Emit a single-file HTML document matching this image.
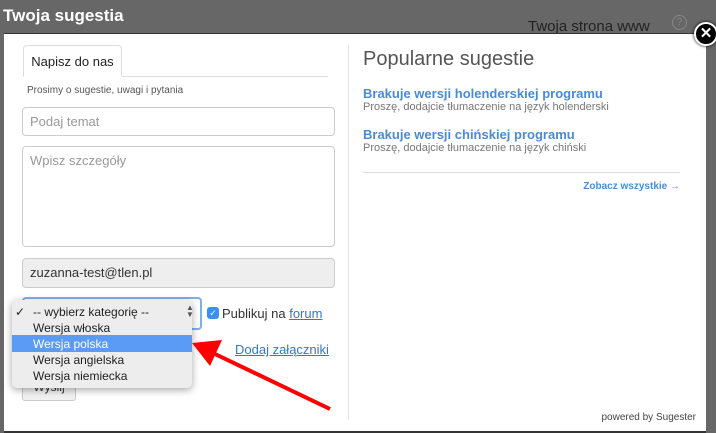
<!DOCTYPE html>
<html><head><meta charset="utf-8"><style>
body{margin:0;width:716px;height:432px;background:#676767;position:relative;overflow:hidden;font-family:"Liberation Sans",sans-serif}
.a{position:absolute}
.in{position:absolute;border:1px solid #ccc;border-radius:4px;background:#fff;box-sizing:border-box;font-size:13px;color:#999;padding:0 7px}
</style></head><body>
<div class="a" style="left:3px;top:6px;color:#fff;font-weight:bold;font-size:17px">Twoja sugestia</div>
<div class="a" style="left:528px;top:18px;color:#222;font-size:15px">Twoja strona www</div>
<div class="a" style="left:672px;top:15px;width:13px;height:13px;border:1px solid #888;border-radius:50%;color:#888;font-size:10px;text-align:center;line-height:13px">?</div>
<div class="a" style="left:4px;top:33px;width:702px;height:397px;background:#fff;border-top:1px solid #333;border-bottom:2px solid #333"></div>
<div class="a" style="left:348px;top:45px;width:1px;height:375px;background:#e3e3e3"></div>
<div class="a" style="left:23px;top:76px;width:305px;height:1px;background:#ddd"></div>
<div class="a" style="left:23px;top:45px;width:99px;height:32px;border:1px solid #ddd;border-bottom:1px solid #fff;border-radius:4px 4px 0 0;background:#fff;box-sizing:border-box;font-size:13px;color:#222;text-align:center;line-height:32px">Napisz do nas</div>
<div class="a" style="left:27px;top:85px;font-size:10px;color:#555">Prosimy o sugestie, uwagi i pytania</div>
<div class="in" style="left:22px;top:107px;width:313px;height:29px;line-height:27px">Podaj temat</div>
<div class="in" style="left:22px;top:146px;width:313px;height:101px;padding-top:6px">Wpisz szczegóły</div>
<div class="in" style="left:22px;top:258px;width:313px;height:30px;line-height:28px;background:#eee;color:#333">zuzanna-test@tlen.pl</div>
<div class="a" style="left:22px;top:297px;width:180px;height:33px;border:2px solid #7fb0e8;border-radius:4px;box-sizing:border-box;background:#fff"></div>
<div class="a" style="left:22px;top:376px;width:54px;height:25px;border:1px solid #ccc;border-radius:3px;background:#f2f2f2;box-sizing:border-box;font-size:12px;text-align:center;line-height:20px;color:#333">Wyślij</div>
<div class="a" style="left:207px;top:307px;width:12px;height:12px;background:#3a8ff0;border-radius:3px;color:#fff;font-size:9px;text-align:center;line-height:12px">✓</div>
<div class="a" style="left:222px;top:306px;font-size:13px;color:#333">Publikuj na <span style="color:#3178c6;text-decoration:underline">forum</span></div>
<div class="a" style="left:235px;top:342px;font-size:13px;color:#3178c6;text-decoration:underline">Dodaj załączniki</div>
<div class="a" style="left:12px;top:300px;width:180px;height:88px;background:#ededed;border-radius:5px;box-shadow:0 2px 8px rgba(0,0,0,.35);font-size:12px;color:#222">
<div class="a" style="left:3px;top:5px">✓</div>
<div class="a" style="left:21px;top:5px">-- wybierz kategorię --</div>
<div class="a" style="left:174px;top:4px;font-size:8px;line-height:7px;color:#555">▲<br>▼</div>
<div class="a" style="left:21px;top:21px">Wersja włoska</div>
<div class="a" style="left:0;top:35px;width:180px;height:17px;background:#5b9bf5"></div>
<div class="a" style="left:21px;top:37px;color:#fff">Wersja polska</div>
<div class="a" style="left:21px;top:53px">Wersja angielska</div>
<div class="a" style="left:21px;top:69px">Wersja niemiecka</div>
</div>
<svg class="a" style="left:0;top:0" width="716" height="432"><line x1="330" y1="409" x2="215" y2="354" stroke="#f00" stroke-width="4"/><polygon points="192,343 222,340 210,366" fill="#f00"/></svg>
<div class="a" style="left:363px;top:48px;font-size:20px;color:#555">Popularne sugestie</div>
<div class="a" style="left:363px;top:86px;font-size:13px;font-weight:bold;color:#4a8ad6">Brakuje wersji holenderskiej programu</div>
<div class="a" style="left:363px;top:101px;font-size:11px;color:#777">Proszę, dodajcie tłumaczenie na język holenderski</div>
<div class="a" style="left:363px;top:127px;font-size:13px;font-weight:bold;color:#4a8ad6">Brakuje wersji chińskiej programu</div>
<div class="a" style="left:363px;top:142px;font-size:11px;color:#777">Proszę, dodajcie tłumaczenie na język chiński</div>
<div class="a" style="left:363px;top:172px;width:317px;height:1px;background:#ddd"></div>
<div class="a" style="left:560px;top:181px;width:120px;text-align:right;font-size:10px;font-weight:bold;color:#4a8ad6">Zobacz wszystkie →</div>
<div class="a" style="left:540px;top:412px;width:156px;text-align:right;font-size:10px;color:#444">powered by Sugester</div>
<div class="a" style="left:694px;top:22px;width:20px;height:20px;background:#000;border:2px solid #fff;border-radius:50%;box-shadow:0 0 3px #000;color:#fff;font-weight:bold;font-size:15px;text-align:center;line-height:20px">✕</div>
</body></html>
